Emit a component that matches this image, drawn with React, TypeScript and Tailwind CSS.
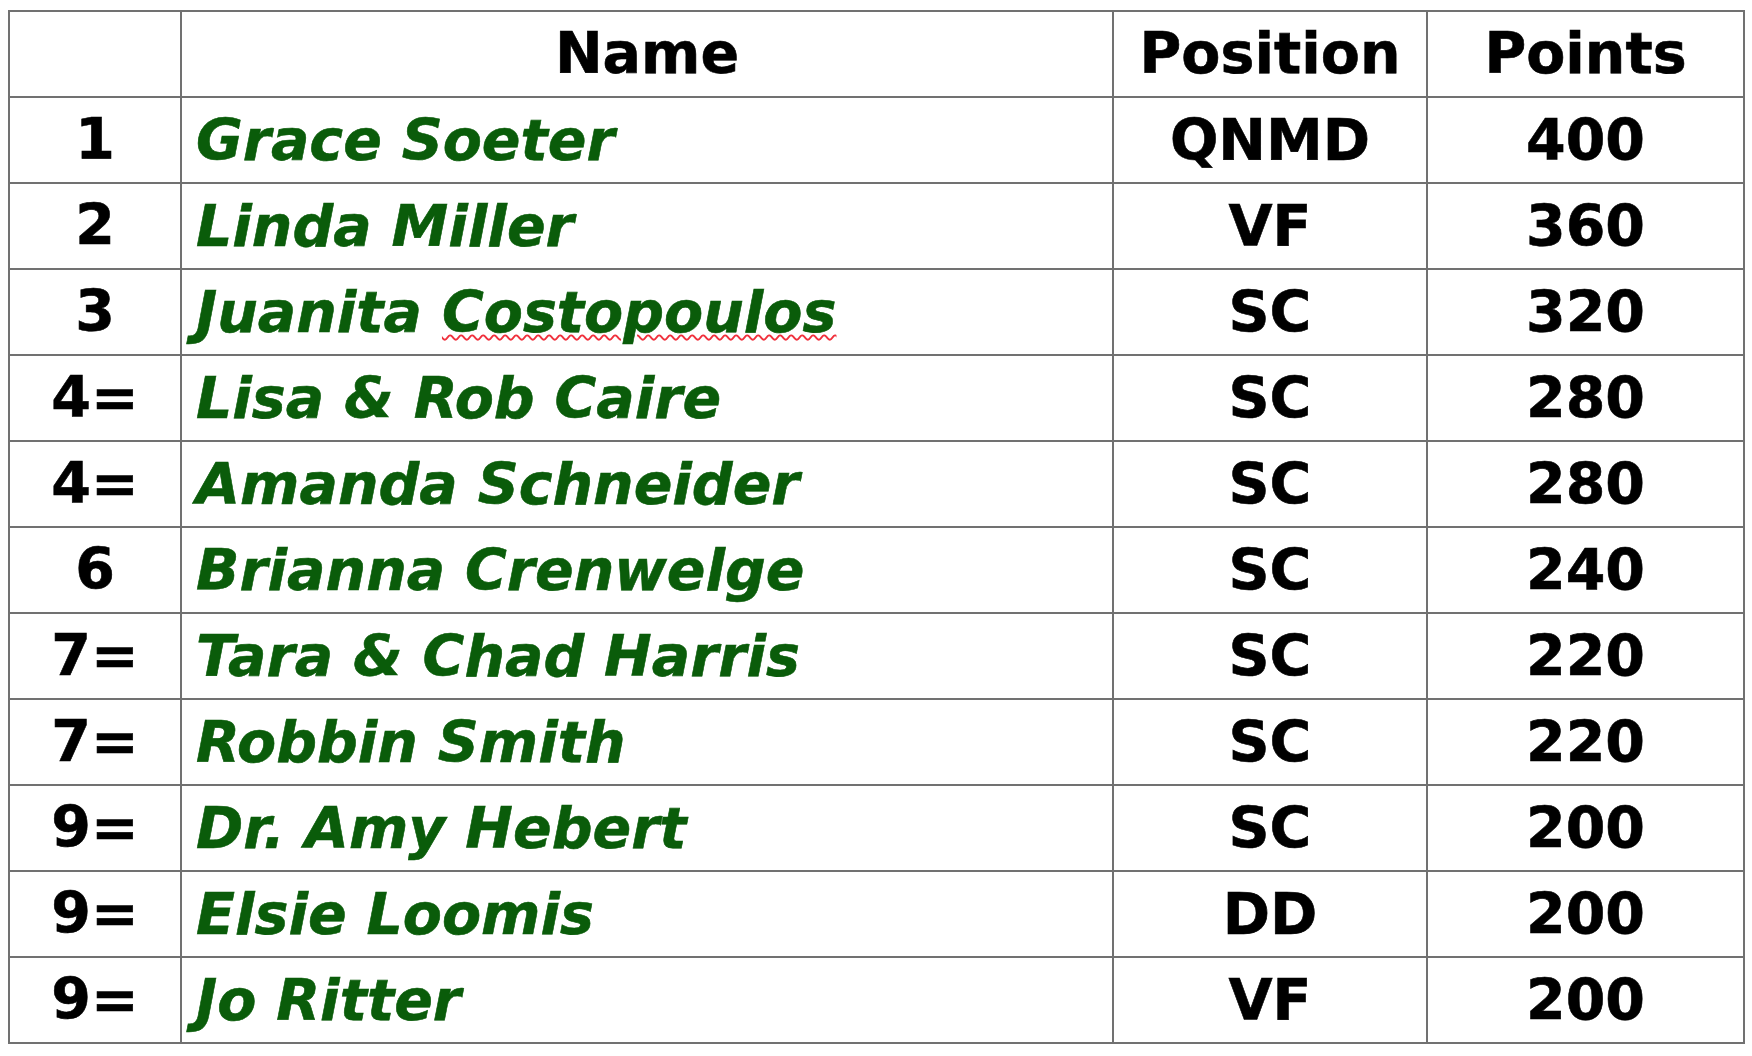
import React from "react";

type Row = { rank: string; name: React.ReactNode; position: string; points: string };

// Standings rows
const rows: Row[] = [
  { rank: "1", name: "Grace Soeter", position: "QNMD", points: "400" },
  { rank: "2", name: "Linda Miller", position: "VF", points: "360" },
  {
    rank: "3",
    name: (
      <>
        Juanita{" "}
        <span className="underline decoration-wavy decoration-[#f0303c] decoration-2 underline-offset-[2px]">
          Costopoulos
        </span>
      </>
    ),
    position: "SC",
    points: "320",
  },
  { rank: "4=", name: "Lisa & Rob Caire", position: "SC", points: "280" },
  { rank: "4=", name: "Amanda Schneider", position: "SC", points: "280" },
  { rank: "6", name: "Brianna Crenwelge", position: "SC", points: "240" },
  { rank: "7=", name: "Tara & Chad Harris", position: "SC", points: "220" },
  { rank: "7=", name: "Robbin Smith", position: "SC", points: "220" },
  { rank: "9=", name: "Dr. Amy Hebert", position: "SC", points: "200" },
  { rank: "9=", name: "Elsie Loomis", position: "DD", points: "200" },
  { rank: "9=", name: "Jo Ritter", position: "VF", points: "200" },
];

const cell = "bg-white h-[84px] flex items-center";

export default function App() {
  return (
    <div className="min-h-screen bg-white pt-[10px] pl-[8px] font-['DejaVu_Sans',Verdana,sans-serif] font-bold text-[57px] text-black [-webkit-text-stroke:0.6px_currentcolor]">
      <div className="grid grid-cols-[170px_930px_312px_315px] gap-[2px] p-[2px] bg-[#717171] w-max">
        {/* Header */}
        <div className={cell}></div>
        <div className={`${cell} justify-center`}>Name</div>
        <div className={`${cell} justify-center`}>Position</div>
        <div className={`${cell} justify-center`}>Points</div>

        {rows.map((r, i) => (
          <React.Fragment key={i}>
            <div className={`${cell} justify-center`}>{r.rank}</div>
            <div className={`${cell} pl-[14px] pt-[2px] italic text-[#0a5c0a] whitespace-nowrap`}>
              <span>{r.name}</span>
            </div>
            <div className={`${cell} justify-center pt-[2px]`}>{r.position}</div>
            <div className={`${cell} justify-center pt-[2px]`}>{r.points}</div>
          </React.Fragment>
        ))}
      </div>
    </div>
  );
}
